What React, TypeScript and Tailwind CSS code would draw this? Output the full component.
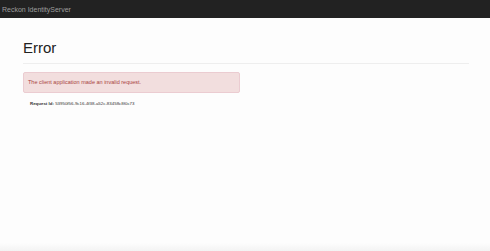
import React from "react";

const ErrorPage: React.FC = () => {
  return (
    <div className="flex min-h-screen flex-col bg-[#fdfdfd] font-['Liberation_Sans',Arial,sans-serif] text-[#333]">
      {/* Top navbar */}
      <div className="flex h-[18px] items-center bg-[#222] pl-[2px]">
        <span className="text-[7px] leading-none text-[#9d9d9d]">Reckon IdentityServer</span>
      </div>

      {/* Page content */}
      <div className="flex-1 px-[21px] pl-[23px]">
        <div className="mt-[22px] border-b border-[#eee] pb-[7px]">
          <h1 className="text-[15px] leading-[16px] text-[#222]">Error</h1>
        </div>

        <div className="mt-[8px] w-[217px] rounded-[2px] border border-[#ebccd1] bg-[#f2dede] px-[4px] py-[6px]">
          <p className="text-[5.5px] leading-[7px] text-[#a94442]">
            The client application made an invalid request.
          </p>
        </div>

        <div className="mt-[8px] pl-[7px] text-[4.4px] leading-[6px]">
          <strong>Request Id:</strong> 53950f56-9c16-4f38-a52c-83458c8f0c73
        </div>
      </div>

      {/* Faint bottom edge */}
      <div className="h-[8px] bg-gradient-to-b from-[#fdfdfd] to-[#f3f3f3]" />
    </div>
  );
};

export default function App() {
  return <ErrorPage />;
}
